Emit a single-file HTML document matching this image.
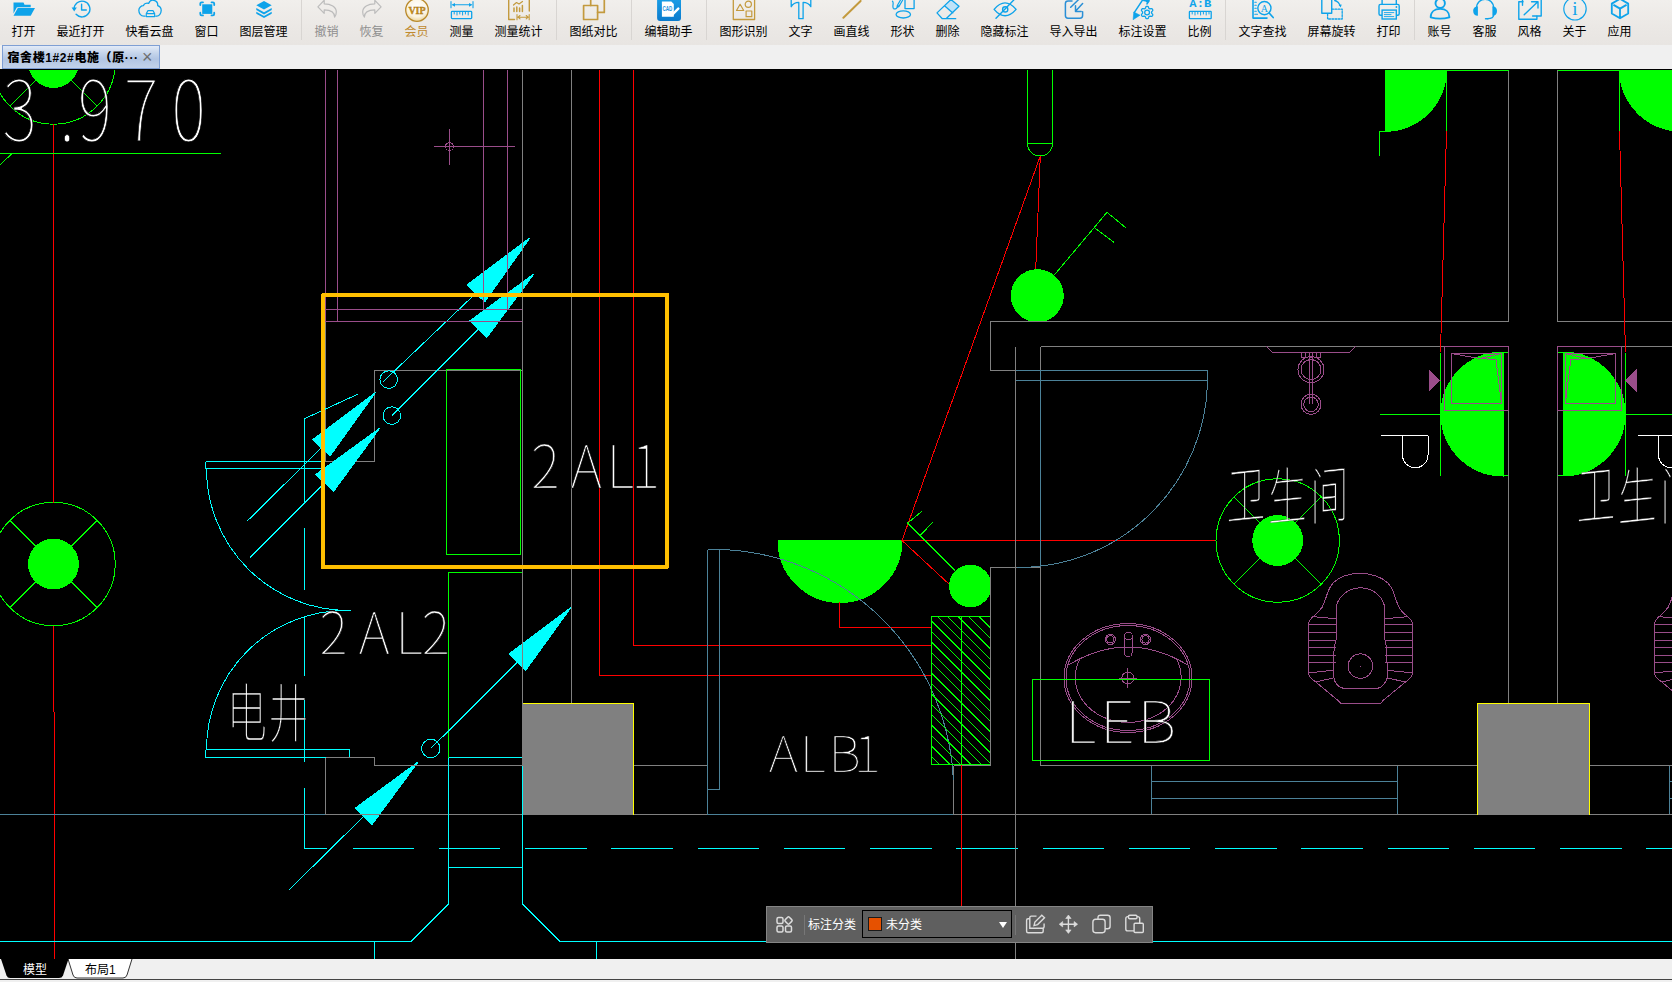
<!DOCTYPE html>
<html lang="zh-CN"><head><meta charset="utf-8"><title>CAD</title>
<style>
html,body{margin:0;padding:0;}
body{width:1672px;height:982px;overflow:hidden;background:#f0f0f0;position:relative;font-family:"Liberation Sans","Noto Sans CJK SC",sans-serif;font-size:12px;color:#000;}
#toolbar{position:absolute;left:0;top:0;width:1672px;height:45px;background:linear-gradient(#f1efec,#ebe8e5 60%,#e8e5e2);display:flex;overflow:hidden;padding-left:1px;box-sizing:border-box;}
.tbi{position:relative;height:45px;flex:none;text-align:center;}
.tbi .ic{position:absolute;left:50%;top:0;overflow:hidden;}
.tbi span{position:absolute;left:0;right:0;top:23px;line-height:18px;font-size:12px;white-space:nowrap;}
.tbi.dis span{color:#8e8e8e;} .tbi.vip span{color:#c08a2e;}
.sep{flex:none;width:6px;height:45px;position:relative;}
.sep:after{content:"";position:absolute;left:3px;top:0;height:40px;width:1px;background:#d8d5d2;}
#tabs{position:absolute;left:0;top:45px;width:1672px;height:24px;background:#f0f0f0;}
#tab1{position:absolute;left:2px;top:0;width:156px;height:22px;border:1px solid #7f9fd4;background:linear-gradient(#e3ebf7,#c3d3ea 35%,#b1c5e3 60%,#c2d2ea);font-weight:bold;font-size:12px;line-height:24px;white-space:nowrap;}
#tab1 b{position:absolute;left:4.5px;top:0;letter-spacing:0.6px;}
#tab1 i{position:absolute;left:139px;top:-1px;font-style:normal;font-weight:normal;color:#6e6e6e;font-size:18px;line-height:24px;}
#cad{position:absolute;left:0;top:69px;width:1672px;height:890px;background:#000;display:block;}
#float{position:absolute;left:766px;top:906px;width:385px;height:35px;background:#5f5f5f;border:1px solid #858585;}
#float .lbl{position:absolute;left:41px;top:1px;line-height:35px;color:#fff;font-size:12px;}
#float .vs{position:absolute;top:8px;width:1px;height:20px;background:#777;}
#dd{position:absolute;left:95px;top:3px;width:148px;height:26px;border:1px solid #000;background:#5f5f5f;}
#dd .sw{position:absolute;left:5px;top:6px;width:14px;height:14px;background:#e65100;border:1px solid #1a1a1a;box-sizing:border-box;}
#dd span{position:absolute;left:23px;top:0.5px;line-height:26px;color:#fff;font-size:12px;}
#dd .tri{position:absolute;left:136px;top:11px;width:0;height:0;border-left:4.5px solid transparent;border-right:4.5px solid transparent;border-top:6px solid #fff;}
#float svg{position:absolute;top:7px;}
#bottom{position:absolute;left:0;top:959px;width:1672px;height:23px;background:#f0f0f0;}
#bottom .ln{position:absolute;left:0;top:20px;width:1672px;height:1px;background:#444;}
#bottom svg{position:absolute;left:0;top:0;}
</style></head><body>
<div id="toolbar">
<div class="tbi " style="width:45px"><svg class="ic" style="margin-left:-15.6px" width="32" height="24" viewBox="0 0 32 24"><path d="M5.5,2.4 H15.5 L16.5,4.8 H22.7 V7.2 H8.9 L5.5,13.6 Z" fill="#0ea3ea"/><path d="M9.8,8.1 H27 L22.7,15.8 H5.5 Z" fill="#0ea3ea"/></svg><span>打开</span></div>
<div class="tbi " style="width:69px"><svg class="ic" style="margin-left:-15.8px" width="32" height="24" viewBox="0 0 32 24"><path d="M9.1,9.2 A7.9,7.9 0 1 1 11.1,14.3" fill="none" stroke="#0ea3ea" stroke-width="1.4" stroke-linecap="round" stroke-linejoin="round" /><path d="M6.6,7.6 H11.8 L9.2,11.4 Z" fill="#0ea3ea"/><path d="M16.6,4.3 V10 H21.3" fill="none" stroke="#0ea3ea" stroke-width="1.4" stroke-linecap="round" stroke-linejoin="round" /></svg><span>最近打开</span></div>
<div class="tbi " style="width:69px"><svg class="ic" style="margin-left:-15.4px" width="32" height="24" viewBox="0 0 32 24"><g transform="translate(16 8.5) scale(0.93) translate(-16 -8.5)"><path d="M10.7,16.7 H9.5 C6,16.7 4,13.5 4,10.5 C4,7.5 6.5,5.5 9,5.5 C9.5,3.5 12,2 14.5,3 C15.5,0.5 18,-0.8 20,-0.3 C23,0.3 24.5,3 24.3,5.5 C27,6.5 28.2,8.8 28,11 C27.8,14.5 25.5,16.7 23.5,16.7 H22.2" fill="none" stroke="#0ea3ea" stroke-width="1.4" stroke-linecap="round" stroke-linejoin="round" /><path d="M12,14 L13.8,10.8 H19.2 L21,14 V17.2 H12 Z M12,14 H21" fill="none" stroke="#0ea3ea" stroke-width="1.2" stroke-linecap="round" stroke-linejoin="round" /></g></svg><span>快看云盘</span></div>
<div class="tbi " style="width:45px"><svg class="ic" style="margin-left:-15.5px" width="32" height="24" viewBox="0 0 32 24"><rect x="11.2" y="4.3" width="10.1" height="9.6" fill="#0ea3ea"/><path d="M9.3,5 V3.6 Q9.3,2.3 10.6,2.3 H12 M20.5,2.3 H21.9 Q23.2,2.3 23.2,3.6 V5 M23.2,12.7 V14.1 Q23.2,15.4 21.9,15.4 H20.5 M12,15.4 H10.6 Q9.3,15.4 9.3,14.1 V12.7" fill="none" stroke="#0ea3ea" stroke-width="1.8" stroke-linecap="round" stroke-linejoin="round" /></svg><span>窗口</span></div>
<div class="tbi " style="width:69px"><svg class="ic" style="margin-left:-15.1px" width="32" height="24" viewBox="0 0 32 24"><path d="M16,1 L23.7,5.3 L16,9.6 L8.3,5.3 Z" fill="#0ea3ea"/><path d="M8.3,8 L16,12.3 L23.7,8 V10.1 L16,14.4 L8.3,10.1 Z M8.3,11.7 L16,16 L23.7,11.7 V13.8 L16,18.1 L8.3,13.8 Z" fill="#0ea3ea"/></svg><span>图层管理</span></div>
<div class="sep"></div>
<div class="tbi dis" style="width:45px"><svg class="ic" style="margin-left:-16px" width="32" height="24" viewBox="0 0 32 24"><path d="M6.9,6.8 L13.2,0.3 V3.8 C20,3.8 25.3,7 25.3,12 C25.3,14 24.5,16 23.6,17 C23.6,13 20,10 13.2,9.9 V13.3 Z" fill="none" stroke="#bcbcbc" stroke-width="1.2" stroke-linecap="round" stroke-linejoin="round" /></svg><span>撤销</span></div>
<div class="tbi dis" style="width:45px"><svg class="ic" style="margin-left:-15.3px" width="32" height="24" viewBox="0 0 32 24"><path d="M25.1,6.8 L18.8,0.3 V3.8 C12,3.8 6.7,7 6.7,12 C6.7,14 7.5,16 8.4,17 C8.4,13 12,10 18.8,9.9 V13.3 Z" fill="none" stroke="#bcbcbc" stroke-width="1.2" stroke-linecap="round" stroke-linejoin="round" /></svg><span>恢复</span></div>
<div class="tbi vip" style="width:45px"><svg class="ic" style="margin-left:-15.3px" width="32" height="24" viewBox="0 0 32 24"><defs><radialGradient id="vg" cx="50%" cy="35%" r="65%"><stop offset="0" stop-color="#fff"/><stop offset="0.7" stop-color="#fbf3df"/><stop offset="1" stop-color="#e9d29a"/></radialGradient></defs><circle cx="16" cy="10" r="11.3" fill="url(#vg)" stroke="#b98a2c" stroke-width="1.3"/><text x="16" y="13.6" text-anchor="middle" font-family="'Liberation Serif',serif" font-weight="bold" font-size="10" fill="#c8921a" stroke="#a06a08" stroke-width="0.3">VIP</text></svg><span>会员</span></div>
<div class="tbi " style="width:45px"><svg class="ic" style="margin-left:-15.5px" width="32" height="24" viewBox="0 0 32 24"><path d="M5,1.6 V7.8 M27,1.6 V7.8 M7,4.8 H25" fill="none" stroke="#0ea3ea" stroke-width="1.1" stroke-linecap="round" stroke-linejoin="round" /><path d="M5.6,4.8 L9,2.9 V6.7 Z M26.4,4.8 L23,2.9 V6.7 Z" fill="#0ea3ea"/><rect x="5.4" y="11.4" width="20.3" height="7.2" rx="0.8" fill="none" stroke="#0ea3ea" stroke-width="1.3" stroke-linecap="round" stroke-linejoin="round" /><path d="M8.2,11.4 V14 M11,11.4 V15 M13.8,11.4 V14 M16.6,11.4 V15 M19.4,11.4 V14 M22.2,11.4 V15" fill="none" stroke="#0ea3ea" stroke-width="1" stroke-linecap="round" stroke-linejoin="round" /></svg><span>测量</span></div>
<div class="tbi " style="width:69px"><svg class="ic" style="margin-left:-15.8px" width="32" height="24" viewBox="0 0 32 24"><path d="M11.5,19.5 H5.7 V-1 M26.3,-1 V11" fill="none" stroke="#c39a3e" stroke-width="1.4" stroke-linecap="round" stroke-linejoin="round" /><path d="M11,11.5 V8 M13.8,11.5 V7 M16.6,11.5 V8 M19.4,11.5 V5.5" fill="none" stroke="#c39a3e" stroke-width="1.5" stroke-linecap="round" stroke-linejoin="round" stroke-linecap='butt'/><path d="M10.5,5 L13.5,2.5 L16,4 L19.5,1.5" fill="none" stroke="#c39a3e" stroke-width="1.2" stroke-linecap="round" stroke-linejoin="round" /><path d="M14,14.5 V19.8 M26.2,14.5 V19.8 M15,17.2 H25.2 M17,15.5 L15,17.2 L17,18.9 M23.2,15.5 L25.2,17.2 L23.2,18.9" fill="none" stroke="#c39a3e" stroke-width="1.1" stroke-linecap="round" stroke-linejoin="round" /></svg><span>测量统计</span></div>
<div class="sep"></div>
<div class="tbi " style="width:69px"><svg class="ic" style="margin-left:-15.5px" width="32" height="24" viewBox="0 0 32 24"><rect x="5.6" y="5.5" width="14" height="14" fill="none" stroke="#c39a3e" stroke-width="1.7" stroke-linecap="round" stroke-linejoin="round" stroke-linejoin='miter'/><path d="M12.7,5.5 V-2 M26.3,-2 V12.4 H19.6" fill="none" stroke="#c39a3e" stroke-width="1.7" stroke-linecap="round" stroke-linejoin="round" stroke-linejoin='miter'/></svg><span>图纸对比</span></div>
<div class="sep"></div>
<div class="tbi " style="width:69px"><svg class="ic" style="margin-left:-15.5px" width="32" height="24" viewBox="0 0 32 24"><defs><linearGradient id="eg" x1="0" y1="0" x2="0" y2="1"><stop offset="0" stop-color="#1ba3ea"/><stop offset="1" stop-color="#0b7bcd"/></linearGradient></defs><rect x="4.1" y="-5" width="23.9" height="25.9" rx="3" fill="url(#eg)"/><path d="M8.9,1.4 H18.3 L20.8,3.9 V16.7 H8.9 Z" fill="#fff"/><text x="9.5" y="11.2" font-family="'Liberation Sans',sans-serif" font-weight="bold" font-size="7" fill="#1a8fdc" textLength="9.8" lengthAdjust="spacingAndGlyphs">CAD</text><path d="M19.3,14.6 L25.3,8.6" stroke="#fff" stroke-width="2.4" stroke-linecap="round"/><path d="M17.6,16.6 L18.2,14.2 L20,16 Z" fill="#fff"/></svg><span>编辑助手</span></div>
<div class="sep"></div>
<div class="tbi " style="width:69px"><svg class="ic" style="margin-left:-15.5px" width="32" height="24" viewBox="0 0 32 24"><path d="M5.3,-3 V19.5 H26.6 V-3" fill="none" stroke="#c39a3e" stroke-width="1.3" stroke-linecap="round" stroke-linejoin="round" stroke-linejoin='miter'/><path d="M8.5,10.5 L12.1,4.3 L15.7,10.5 Z" fill="none" stroke="#c39a3e" stroke-width="1.2" stroke-linecap="round" stroke-linejoin="round" /><circle cx="20.3" cy="4.3" r="3.1" fill="none" stroke="#c39a3e" stroke-width="1.2" stroke-linecap="round" stroke-linejoin="round" /><rect x="18.1" y="11" width="5.7" height="5.7" fill="none" stroke="#c39a3e" stroke-width="1.2" stroke-linecap="round" stroke-linejoin="round" /></svg><span>图形识别</span></div>
<div class="tbi " style="width:45px"><svg class="ic" style="margin-left:-15.1px" width="32" height="24" viewBox="0 0 32 24"><path d="M6.2,6.7 V-2 H25.8 V6.7 C24,3.5 21,2.4 18.1,2.4 V18.7 H13.8 V2.4 C11,2.4 8,3.5 6.2,6.7 Z" fill="none" stroke="#0ea3ea" stroke-width="1.3" stroke-linecap="round" stroke-linejoin="round" /></svg><span>文字</span></div>
<div class="tbi " style="width:57px"><svg class="ic" style="margin-left:-15.2px" width="32" height="24" viewBox="0 0 32 24"><path d="M7.4,17.7 L24.6,1" fill="none" stroke="#c39a3e" stroke-width="2" stroke-linecap="round" stroke-linejoin="round" /></svg><span>画直线</span></div>
<div class="tbi " style="width:45px"><svg class="ic" style="margin-left:-15.8px" width="32" height="24" viewBox="0 0 32 24"><rect x="18" y="-2" width="9.1" height="10.6" fill="none" stroke="#0ea3ea" stroke-width="1.3" stroke-linecap="round" stroke-linejoin="round" /><ellipse cx="16.3" cy="14.4" rx="7.2" ry="3.6" fill="none" stroke="#0ea3ea" stroke-width="1.3" stroke-linecap="round" stroke-linejoin="round" /><path d="M5.5,1.2 C7.2,2.8 5,6 6.3,8.3 C7.6,9.6 9.3,8.8 10,7.6 L10.3,5.5 L13.8,-0.5 M10.3,5.5 L12,6.4 L15.6,0.3 M10,7.6 L12,6.4" fill="none" stroke="#0ea3ea" stroke-width="1.2" stroke-linecap="round" stroke-linejoin="round" /></svg><span>形状</span></div>
<div class="tbi " style="width:45px"><svg class="ic" style="margin-left:-15.3px" width="32" height="24" viewBox="0 0 32 24"><path d="M19,-0.5 L27,6.2 L20.8,12.9 L13.1,6.2 Z" fill="#bfe3f8"/><path d="M19,-0.5 L27,6.2 L14.1,18.7 H10.3 L5,12.9 Z M13.1,6.2 L20.8,12.9 M10.3,18.7 H23.7" fill="none" stroke="#0ea3ea" stroke-width="1.3" stroke-linecap="round" stroke-linejoin="round" /></svg><span>删除</span></div>
<div class="tbi " style="width:69px"><svg class="ic" style="margin-left:-15.5px" width="32" height="24" viewBox="0 0 32 24"><path d="M5.1,9.4 Q16,-3.6 27.1,9.4 Q16,22.2 5.1,9.4 Z" fill="none" stroke="#0ea3ea" stroke-width="1.4" stroke-linecap="round" stroke-linejoin="round" /><circle cx="16.2" cy="9.4" r="2.6" fill="none" stroke="#0ea3ea" stroke-width="1.4" stroke-linecap="round" stroke-linejoin="round" /><path d="M7,18.2 L24.8,0" fill="none" stroke="#0ea3ea" stroke-width="1.4" stroke-linecap="round" stroke-linejoin="round" /></svg><span>隐藏标注</span></div>
<div class="tbi " style="width:69px"><svg class="ic" style="margin-left:-15.5px" width="32" height="24" viewBox="0 0 32 24"><path d="M14,1 H10 Q7.4,1 7.4,3.6 V15.6 Q7.4,18.2 10,18.2 H22 Q24.6,18.2 24.6,15.6 V11.8" fill="none" stroke="#2a8fd6" stroke-width="1.5" stroke-linecap="round" stroke-linejoin="round" /><path d="M12.7,7.2 L20.4,-0.2 M24.6,3.6 L17.5,11.2 M17.5,5.8 V11.4 H23.2" fill="none" stroke="#2a8fd6" stroke-width="1.5" stroke-linecap="round" stroke-linejoin="round" /></svg><span>导入导出</span></div>
<div class="tbi " style="width:69px"><svg class="ic" style="margin-left:-17.5px" width="32" height="24" viewBox="0 0 32 24"><path d="M17.9,-0.5 L9.4,12.4" fill="none" stroke="#0ea3ea" stroke-width="1.5" stroke-linecap="round" stroke-linejoin="round" /><path d="M17.3,-1 H25 L24.6,1.5 L22.3,4.8 L21,4.3 L21.8,2.6 L20.5,1.5 L18.4,1.3 Z" fill="#0ea3ea"/><path d="M8.8,12 L15,15.2 L8.1,19.7 Z" fill="#0ea3ea" stroke="#0ea3ea" stroke-width="0.6" stroke-linejoin="round"/><path d="M26.60,12.50 L26.58,12.89 L26.70,13.31 L27.27,13.88 L27.77,14.56 L27.72,15.12 L27.47,15.60 L27.18,16.06 L26.72,16.38 L25.88,16.28 L25.10,16.08 L24.68,16.19 L24.35,16.40 L24.00,16.58 L23.70,16.89 L23.48,17.67 L23.15,18.44 L22.64,18.68 L22.10,18.70 L21.56,18.68 L21.05,18.44 L20.72,17.67 L20.50,16.89 L20.20,16.58 L19.85,16.40 L19.52,16.19 L19.10,16.08 L18.32,16.28 L17.48,16.38 L17.02,16.06 L16.73,15.60 L16.48,15.12 L16.43,14.56 L16.93,13.88 L17.50,13.31 L17.62,12.89 L17.60,12.50 L17.62,12.11 L17.50,11.69 L16.93,11.12 L16.43,10.44 L16.48,9.88 L16.73,9.40 L17.02,8.94 L17.48,8.62 L18.32,8.72 L19.10,8.92 L19.52,8.81 L19.85,8.60 L20.20,8.42 L20.50,8.11 L20.72,7.33 L21.05,6.56 L21.56,6.32 L22.10,6.30 L22.64,6.32 L23.15,6.56 L23.48,7.33 L23.70,8.11 L24.00,8.42 L24.35,8.60 L24.68,8.81 L25.10,8.92 L25.88,8.72 L26.72,8.62 L27.18,8.94 L27.47,9.40 L27.72,9.88 L27.77,10.44 L27.27,11.12 L26.70,11.69 L26.58,12.11 Z" fill="none" stroke="#0ea3ea" stroke-width="1.3" stroke-linecap="round" stroke-linejoin="round" /><circle cx="22.1" cy="12.5" r="2.4" fill="none" stroke="#0ea3ea" stroke-width="1.3" stroke-linecap="round" stroke-linejoin="round" /></svg><span>标注设置</span></div>
<div class="tbi " style="width:45px"><svg class="ic" style="margin-left:-15.7px" width="32" height="24" viewBox="0 0 32 24"><text x="16.3" y="7" text-anchor="middle" font-family="'Liberation Mono',monospace" font-weight="bold" font-size="10.5" fill="#0ea3ea" textLength="22" lengthAdjust="spacingAndGlyphs">A:B</text><rect x="5.4" y="11.4" width="21.8" height="7.2" rx="0.6" fill="none" stroke="#0ea3ea" stroke-width="1.3" stroke-linecap="round" stroke-linejoin="round" /><path d="M8.2,11.4 V14 M11,11.4 V15 M13.8,11.4 V14 M16.6,11.4 V15 M19.4,11.4 V14 M22.2,11.4 V15 M25,11.4 V14" fill="none" stroke="#0ea3ea" stroke-width="1" stroke-linecap="round" stroke-linejoin="round" /></svg><span>比例</span></div>
<div class="sep"></div>
<div class="tbi " style="width:69px"><svg class="ic" style="margin-left:-15.7px" width="32" height="24" viewBox="0 0 32 24"><path d="M6,-2 V18.1 H20" fill="none" stroke="#0ea3ea" stroke-width="1.6" stroke-linecap="round" stroke-linejoin="round" stroke-linejoin='miter'/><path d="M7.8,2.3 H9.3 M7.8,5.3 H9.3 M7.8,8.3 H9.3 M7.8,11.3 H9.3 M7.8,14.3 H10.5" fill="none" stroke="#0ea3ea" stroke-width="1.1" stroke-linecap="round" stroke-linejoin="round" /><circle cx="17.4" cy="8.1" r="6.6" fill="#f0eeeb" stroke="#0ea3ea" stroke-width="1.4"/><path d="M22.2,13 L26.2,17.6" fill="none" stroke="#0ea3ea" stroke-width="1.6" stroke-linecap="round" stroke-linejoin="round" /><text x="17.4" y="11.6" text-anchor="middle" font-family="'Liberation Serif',serif" font-size="10" fill="#0ea3ea">A</text></svg><span>文字查找</span></div>
<div class="tbi " style="width:69px"><svg class="ic" style="margin-left:-15.7px" width="32" height="24" viewBox="0 0 32 24"><path d="M5.8,-2 V13.3 H15.7 V-2" fill="none" stroke="#0ea3ea" stroke-width="1.4" stroke-linecap="round" stroke-linejoin="round" stroke-linejoin='miter'/><path d="M15.7,9.2 H26.2 V19 H11.6 V13.3" fill="none" stroke="#0ea3ea" stroke-width="1.3" stroke-linecap="round" stroke-linejoin="round" stroke-dasharray='1.8 1.4' stroke-linecap='butt'/><path d="M19,0.3 Q23,1.8 24.3,5.6" fill="none" stroke="#0ea3ea" stroke-width="1.3" stroke-linecap="round" stroke-linejoin="round" /><path d="M17.8,-0.8 L20.5,-0.6 L19,1.9 Z M22.6,5 L25.7,4.4 L24.8,7.4 Z" fill="#0ea3ea"/></svg><span>屏幕旋转</span></div>
<div class="tbi " style="width:45px"><svg class="ic" style="margin-left:-15.7px" width="32" height="24" viewBox="0 0 32 24"><path d="M9.1,4.3 V-2 M23.3,-2 V4.3" fill="none" stroke="#0ea3ea" stroke-width="1.4" stroke-linecap="round" stroke-linejoin="round" /><rect x="6" y="4.4" width="20.2" height="10.8" rx="1.5" fill="none" stroke="#0ea3ea" stroke-width="1.4" stroke-linecap="round" stroke-linejoin="round" /><rect x="9.1" y="10.1" width="14.2" height="8.9" fill="#f0eeeb" stroke="#0ea3ea" stroke-width="1.4"/><path d="M11.3,12.6 H20.8 M11.3,14.6 H18 M11.3,16.6 H20.8" fill="none" stroke="#0ea3ea" stroke-width="0.9" stroke-linecap="round" stroke-linejoin="round" /><circle cx="23.4" cy="7" r="0.9" fill="#0ea3ea"/></svg><span>打印</span></div>
<div class="sep"></div>
<div class="tbi " style="width:45px"><svg class="ic" style="margin-left:-15.5px" width="32" height="24" viewBox="0 0 32 24"><circle cx="16.2" cy="3.3" r="4.7" fill="none" stroke="#0ea3ea" stroke-width="1.9" stroke-linecap="round" stroke-linejoin="round" /><path d="M6.7,17.3 C6.7,12 10.5,8.9 16.2,8.9 C21.8,8.9 25.4,12 25.4,17.3 C20,18.8 12,18.8 6.7,17.3 Z" fill="none" stroke="#0ea3ea" stroke-width="1.9" stroke-linecap="round" stroke-linejoin="round" /></svg><span>账号</span></div>
<div class="tbi " style="width:45px"><svg class="ic" style="margin-left:-15.8px" width="32" height="24" viewBox="0 0 32 24"><path d="M7.6,8 C7.6,-3.5 24.6,-3.5 24.6,8" fill="none" stroke="#0ea3ea" stroke-width="1.4" stroke-linecap="round" stroke-linejoin="round" /><path d="M8.9,6.5 C5.5,6.5 4.2,8.5 4.2,11 C4.2,13.8 5.8,15.8 8.9,15.8 Z M23.4,6.5 C26.8,6.5 28,8.5 28,11 C28,13.8 26.5,15.8 23.4,15.8 Z" fill="#0ea3ea"/><path d="M24.6,15 C24.6,17.8 22,18.6 18.5,18.7" fill="none" stroke="#0ea3ea" stroke-width="1.3" stroke-linecap="round" stroke-linejoin="round" /><rect x="15.8" y="17.9" width="4" height="1.7" rx="0.8" fill="#0ea3ea"/></svg><span>客服</span></div>
<div class="tbi " style="width:45px"><svg class="ic" style="margin-left:-15.5px" width="32" height="24" viewBox="0 0 32 24"><path d="M9,1.7 H4.8 V19.3 H22.9 V16.1" fill="none" stroke="#0ea3ea" stroke-width="1.4" stroke-linecap="round" stroke-linejoin="round" stroke-linejoin='miter'/><path d="M8.5,-2 V5.3 M27.2,-2 V16 H18.6" fill="none" stroke="#0ea3ea" stroke-width="1.4" stroke-linecap="round" stroke-linejoin="round" stroke-linejoin='miter'/><path d="M10.2,14.8 L23.8,1.8 M17.6,1.7 H24 V8" fill="none" stroke="#0ea3ea" stroke-width="1.4" stroke-linecap="round" stroke-linejoin="round" /></svg><span>风格</span></div>
<div class="tbi " style="width:45px"><svg class="ic" style="margin-left:-15.5px" width="32" height="24" viewBox="0 0 32 24"><circle cx="16" cy="8.8" r="11.2" fill="none" stroke="#0ea3ea" stroke-width="1.2" stroke-linecap="round" stroke-linejoin="round" /><text x="16" y="15.2" text-anchor="middle" font-family="'Liberation Serif',serif" font-size="19" fill="#0ea3ea">i</text></svg><span>关于</span></div>
<div class="tbi " style="width:45px"><svg class="ic" style="margin-left:-15.5px" width="32" height="24" viewBox="0 0 32 24"><path d="M16,-1.2 L24.2,3.6 V13.5 L16,18.3 L7.8,13.5 V3.6 Z M16,8.6 V17.6 M16,8.6 L10,5.1 M16,8.6 L22,5.1" fill="none" stroke="#0ea3ea" stroke-width="1.8" stroke-linecap="round" stroke-linejoin="round" /></svg><span>应用</span></div>
</div>
<div id="tabs"><div id="tab1"><b>宿舍楼1#2#电施（原···</b><i>×</i></div></div>
<svg id="cad" viewBox="0 69 1672 890" shape-rendering="crispEdges" fill="none" stroke-width="1">
<circle cx="53.5" cy="62.5" r="61.7" stroke="#00ff00"/>
<circle cx="53.5" cy="62.5" r="24.9" fill="#00ff00" stroke="#00ff00"/>
<polyline points="35.893,44.893 9.87151,18.8715" stroke="#00ff00" />
<polyline points="35.893,80.107 9.87151,106.128" stroke="#00ff00" />
<polyline points="71.107,44.893 97.1285,18.8715" stroke="#00ff00" />
<polyline points="71.107,80.107 97.1285,106.128" stroke="#00ff00" />
<circle cx="53.5" cy="564" r="61.7" stroke="#00ff00"/>
<circle cx="53.5" cy="564" r="24.9" fill="#00ff00" stroke="#00ff00"/>
<polyline points="35.893,546.393 9.87151,520.372" stroke="#00ff00" />
<polyline points="35.893,581.607 9.87151,607.628" stroke="#00ff00" />
<polyline points="71.107,546.393 97.1285,520.372" stroke="#00ff00" />
<polyline points="71.107,581.607 97.1285,607.628" stroke="#00ff00" />
<polyline points="53.5,124 53.5,502.5" stroke="#ff0000" />
<polyline points="53.5,625.5 53.5,711.5" stroke="#ff0000" />
<polyline points="54.5,711.5 54.5,959" stroke="#ff0000" />
<polyline points="0,153.5 221,153.5" stroke="#00ff00" />
<polyline points="12,153.5 0,165" stroke="#00ff00" />
<polyline points="325.5,461.5 374.5,461.5 374.5,370.5 522.5,370.5" stroke="#808080" />
<polyline points="325.5,296 325.5,461.5" stroke="#808080" />
<rect x="446.5" y="369.5" width="74" height="185" stroke="#00ff00"/>
<polyline points="448.5,757.5 448.5,572.5 522.5,572.5" stroke="#00ff00" />
<polyline points="205.5,461.5 321.5,461.5" stroke="#00ffff" />
<polyline points="205.5,468.5 321.5,468.5" stroke="#00ffff" />
<polyline points="205.5,461.5 205.5,468.5" stroke="#00ffff" />
<path d="M206.5,468.5 A142,142 0 0 0 348.5,610.5 L351,610.5" stroke="#00ffff" fill="none" />
<path d="M206.5,749.5 A139,139 0 0 1 345.5,610.5" stroke="#00ffff" fill="none" />
<polyline points="205.5,749.5 349.5,749.5" stroke="#00ffff" />
<polyline points="205.5,757.5 325.5,757.5" stroke="#00ffff" />
<polyline points="205.5,749.5 205.5,757.5" stroke="#00ffff" />
<polyline points="349.5,749.5 349.5,757.5" stroke="#00ffff" />
<polyline points="358.4,393.9 304.5,418.7 304.5,502" stroke="#00ffff" />
<polyline points="304.5,528 304.5,589.5" stroke="#00ffff" />
<polyline points="304.5,617 304.5,676" stroke="#00ffff" />
<polyline points="304.5,700 304.5,761.5" stroke="#00ffff" />
<polyline points="304.5,787.5 304.5,848.5" stroke="#00ffff" />
<polyline points="304.5,848.5 326.5,848.5" stroke="#00ffff" />
<polyline points="352.5,848.5 1672,848.5" stroke="#00ffff" stroke-dasharray="61.5 24.75"/>
<polygon points="530.1,237.7 466.8,285 484.7,301.8" fill="#00ffff" stroke="#00ffff"/>
<polyline points="475.75,293.4 382.5,382.3" stroke="#00ffff" />
<circle cx="388.7" cy="379.6" r="8.8" stroke="#00ffff"/>
<polygon points="534.3,273.6 470.2,320.6 486.7,337.5" fill="#00ffff" stroke="#00ffff"/>
<polyline points="478.45,329.05 391.8,415.6" stroke="#00ffff" />
<circle cx="391.8" cy="415.6" r="8.8" stroke="#00ffff"/>
<polygon points="375.5,392.5 312.8,439.5 330,456" fill="#00ffff" stroke="#00ffff"/>
<polyline points="321.4,447.75 247.3,521" stroke="#00ffff" />
<polygon points="379.8,428.1 315.7,474.6 333.6,491.4" fill="#00ffff" stroke="#00ffff"/>
<polyline points="324.65,483 250,557.7" stroke="#00ffff" />
<polygon points="571,607.5 509.3,653.7 525.7,670.3" fill="#00ffff" stroke="#00ffff"/>
<polyline points="517.5,662 430.8,748.5" stroke="#00ffff" />
<circle cx="430.8" cy="748.5" r="9.2" stroke="#00ffff"/>
<polygon points="418.3,761.7 355,808.3 371.7,825" fill="#00ffff" stroke="#00ffff"/>
<polyline points="363.35,816.65 289,890" stroke="#00ffff" />
<polyline points="325.5,69 325.5,321.5" stroke="#9a4d8a" />
<polyline points="337.5,69 337.5,321.5" stroke="#9a4d8a" />
<polyline points="483.5,69 483.5,309.5" stroke="#9a4d8a" />
<polyline points="507.5,69 507.5,309.5" stroke="#9a4d8a" />
<polyline points="325.5,309.5 522.5,309.5" stroke="#9a4d8a" />
<polyline points="325.5,321.5 522.5,321.5" stroke="#9a4d8a" />
<polyline points="522.5,69 522.5,703" stroke="#808080" />
<polyline points="434,146.5 515,146.5" stroke="#9a4d8a" />
<polyline points="449.5,129 449.5,165" stroke="#9a4d8a" />
<circle cx="449.5" cy="146.5" r="4" stroke="#9a4d8a"/>
<polyline points="0,814.5 325.5,814.5" stroke="#4c8299" />
<polyline points="325.5,757.5 374.5,757.5 374.5,765.5 522.5,765.5" stroke="#808080" />
<polyline points="325.5,757.5 325.5,814.5" stroke="#808080" />
<polyline points="325.5,814.5 707.5,814.5" stroke="#808080" />
<polyline points="448.5,757.5 448.5,904 411,941.5 0,941.5" stroke="#00ffff" />
<polyline points="448.5,757.5 522.5,757.5" stroke="#00ffff" />
<polyline points="448.5,867.5 522.5,867.5" stroke="#00ffff" />
<polyline points="374.5,941.5 374.5,959" stroke="#00ffff" />
<polyline points="596.5,941.5 596.5,959" stroke="#00ffff" />
<rect x="522" y="703" width="112" height="111.5" fill="#808080"/>
<polyline points="522.5,703.5 633.5,703.5 633.5,814.5" stroke="#ffff00" />
<polyline points="571.5,69 571.5,703" stroke="#808080" />
<polyline points="522.5,765.5 522.5,904 560,941.5 1672,941.5" stroke="#00ffff" />
<polyline points="599.5,69 599.5,675.5 932,675.5" stroke="#ff0000" />
<polyline points="633.5,69 633.5,645.5 932,645.5" stroke="#ff0000" />
<polyline points="633.5,765.5 707.5,765.5" stroke="#808080" />
<polyline points="707.5,549.5 707.5,814.5" stroke="#4c8299" />
<polyline points="719.5,549.5 719.5,789.5" stroke="#4c8299" />
<polyline points="707.5,549.5 719.5,549.5" stroke="#4c8299" />
<polyline points="707.5,789.5 719.5,789.5" stroke="#4c8299" />
<polyline points="707.5,814.5 953.5,814.5" stroke="#4c8299" />
<polyline points="953.5,765.5 953.5,814.5" stroke="#808080" />
<path d="M778,540.5 A62,62 0 0 0 902,540.5 Z" stroke="#00ff00" fill="#00ff00" />
<polyline points="1040.3,156 902,540.5 1215.7,540.5" stroke="#ff0000" />
<polyline points="902,540.5 950.3,585.3" stroke="#ff0000" />
<polyline points="1040.3,156 1035.7,270" stroke="#ff0000" />
<polyline points="839.5,602 839.5,627.5 932,627.5" stroke="#ff0000" />
<path d="M719.5,549.5 A240.5,240.5 0 0 1 953.3,780" stroke="#4c8299" fill="none" />
<polyline points="1027.5,69 1027.5,143.5" stroke="#00ff00" />
<polyline points="1052.5,69 1052.5,143.5" stroke="#00ff00" />
<polyline points="1027.5,143.5 1052.5,143.5" stroke="#00ff00" />
<path d="M1027.5,143.5 A12.5,12.5 0 0 0 1052.5,143.5" stroke="#00ff00" fill="none" />
<circle cx="1037.3" cy="295.7" r="26" fill="#00ff00" stroke="#00ff00"/>
<polyline points="1054.3,275 1107,212.3 1125.7,227.7" stroke="#00ff00" />
<polyline points="1095.3,228.3 1114.3,242.7" stroke="#00ff00" />
<circle cx="970.3" cy="586" r="20.7" fill="#00ff00" stroke="#00ff00"/>
<polyline points="955.3,571 907.7,523 922,511.3" stroke="#00ff00" />
<polyline points="920.3,535.3 933,522" stroke="#00ff00" />
<defs><clipPath id="hc"><rect x="931.5" y="616.5" width="59" height="148"/></clipPath></defs>
<path d="M931.5,548.3 L990.5,607.3 M931.5,558.7 L990.5,617.7 M931.5,569.1 L990.5,628.1 M931.5,579.5 L990.5,638.5 M931.5,589.9 L990.5,648.9 M931.5,600.3 L990.5,659.3 M931.5,610.7 L990.5,669.7 M931.5,621.1 L990.5,680.1 M931.5,631.5 L990.5,690.5 M931.5,641.9 L990.5,700.9 M931.5,652.3 L990.5,711.3 M931.5,662.7 L990.5,721.7 M931.5,673.1 L990.5,732.1 M931.5,683.5 L990.5,742.5 M931.5,693.9 L990.5,752.9 M931.5,704.3 L990.5,763.3 M931.5,714.7 L990.5,773.7 M931.5,725.1 L990.5,784.1 M931.5,735.5 L990.5,794.5 M931.5,745.9 L990.5,804.9 M931.5,756.3 L990.5,815.3 M931.5,766.7 L990.5,825.7 M931.5,777.1 L990.5,836.1 " stroke="#00ff00" clip-path="url(#hc)"/>
<rect x="931.5" y="616.5" width="59" height="148" stroke="#00ff00"/>
<polyline points="961.5,616.5 961.5,764.5" stroke="#00ff00" />
<polyline points="990.5,765.5 990.5,567.5 1040.5,567.5" stroke="#808080" />
<polyline points="1015.5,346.5 1015.5,959" stroke="#808080" />
<polyline points="1040.5,346.5 1040.5,370.5" stroke="#808080" />
<polyline points="1040.5,567.5 1040.5,765.5" stroke="#808080" />
<polyline points="953.5,765.5 990.5,765.5" stroke="#808080" />
<polyline points="961.5,765 961.5,907" stroke="#ff0000" />
<polyline points="1015.5,370.5 990.5,370.5 990.5,321.5 1508.5,321.5 1508.5,69" stroke="#808080" />
<polyline points="1040.5,346.5 1444.5,346.5" stroke="#808080" />
<polyline points="1621.5,346.5 1672,346.5" stroke="#808080" />
<polyline points="1557.5,69 1557.5,321.5 1672,321.5" stroke="#808080" />
<polyline points="1015.5,370.5 1207.5,370.5" stroke="#4c8299" />
<polyline points="1015.5,380.5 1207.5,380.5" stroke="#4c8299" />
<path d="M1207.5,370.5 V383 A189.6,189.6 0 0 1 1017,567.6" stroke="#4c8299" fill="none" />
<polyline points="1040.5,370.5 1040.5,566" stroke="#4c8299" />
<polyline points="1266.5,346.5 1272.5,352.5 1349.5,352.5 1355.5,346.5" stroke="#9a4d8a" />
<g stroke="#9a4d8a"><circle cx="1311" cy="369.6" r="13"/><circle cx="1311" cy="369.6" r="10"/><circle cx="1311" cy="404.3" r="10"/><circle cx="1311" cy="404.3" r="7.3"/></g>
<rect x="1301.5" y="352.5" width="4" height="5" stroke="#9a4d8a"/><rect x="1316.5" y="352.5" width="4" height="5" stroke="#9a4d8a"/>
<polyline points="1309.5,352.5 1309.5,403.5" stroke="#9a4d8a" />
<polyline points="1312.5,352.5 1312.5,403.5" stroke="#9a4d8a" />
<polyline points="1309.5,357.5 1312.5,357.5" stroke="#9a4d8a" />
<path d="M1385,69 V131.3 A61.3,61.3 0 0 0 1446.3,70 V69 Z" stroke="#00ff00" fill="#00ff00" />
<path d="M1672,69 L1619.5,69 A62,62 0 0 0 1672,130.5 Z" stroke="#00ff00" fill="#00ff00" />
<polyline points="1385.5,131 1379.5,131 1379.5,156" stroke="#00ff00" />
<polyline points="1446.5,70.5 1508.5,70.5" stroke="#00ff00" />
<polyline points="1557.5,70.5 1619.5,70.5" stroke="#00ff00" />
<polyline points="1446.5,69 1446.5,131" stroke="#00ff00" />
<polyline points="1619.5,69 1619.5,131" stroke="#00ff00" />
<polyline points="1446.5,131 1440.5,352.5" stroke="#ff0000" />
<polyline points="1619.5,131 1625.5,352.5" stroke="#ff0000" />
<path d="M1503,352 A62,62 0 0 0 1503,476 Z" stroke="#00ff00" fill="#00ff00" />
<path d="M1563,352 A62,62 0 0 1 1563,476 Z" stroke="#00ff00" fill="#00ff00" />
<polyline points="1503,352.5 1508.5,352.5" stroke="#00ff00" />
<polyline points="1503,475.5 1508.5,475.5" stroke="#00ff00" />
<polyline points="1557.5,352.5 1563,352.5" stroke="#00ff00" />
<polyline points="1557.5,475.5 1563,475.5" stroke="#00ff00" />
<polyline points="1440.5,352.5 1440.5,475.5" stroke="#00ff00" />
<polyline points="1625.5,352.5 1625.5,475.5" stroke="#00ff00" />
<polyline points="1379.5,414.5 1440.5,414.5" stroke="#00ff00" />
<polyline points="1625.5,414.5 1672,414.5" stroke="#00ff00" />
<rect x="1444.5" y="346.5" width="64" height="64" stroke="#9a4d8a"/><rect x="1557.5" y="346.5" width="64" height="64" stroke="#9a4d8a"/>
<rect x="1451.5" y="353.5" width="50" height="50" stroke="#9a4d8a"/><rect x="1565.5" y="353.5" width="50" height="50" stroke="#9a4d8a"/>
<polyline points="1454,354 1479.5,358.5 1496,359.5 1501.3,402" stroke="#9a4d8a" />
<polyline points="1479.5,358.5 1501.5,353.5" stroke="#9a4d8a" />
<polyline points="1612.8,354 1587.3,358.5 1570.8,359.5 1565.5,402" stroke="#9a4d8a" />
<polyline points="1587.3,358.5 1565.3,353.5" stroke="#9a4d8a" />
<polygon points="1429,370 1429,391 1439.8,380.5" fill="#9a4d8a" stroke="#9a4d8a"/>
<polygon points="1636.5,370 1636.5,391 1626.2,380.5" fill="#9a4d8a" stroke="#9a4d8a"/>
<polyline points="1508.5,410.5 1508.5,703.5" stroke="#808080" />
<polyline points="1557.5,410.5 1557.5,703.5" stroke="#808080" />
<path d="M1381,435.5 H1428 M1402.5,435.5 V455 A12.75,12.75 0 0 0 1428,455 V435.5" stroke="#ffffff" fill="none" />
<path d="M1637.5,435.5 H1672 M1658.5,435.5 V455 A12.75,12.75 0 0 0 1684,455" stroke="#ffffff" fill="none" />
<circle cx="1277.7" cy="540.5" r="61.7" stroke="#00ff00"/>
<circle cx="1277.7" cy="540.5" r="24.9" fill="#00ff00" stroke="#00ff00"/>
<polyline points="1260.09,522.893 1234.07,496.872" stroke="#00ff00" />
<polyline points="1260.09,558.107 1234.07,584.128" stroke="#00ff00" />
<polyline points="1295.31,522.893 1321.33,496.872" stroke="#00ff00" />
<polyline points="1295.31,558.107 1321.33,584.128" stroke="#00ff00" />
<g transform="translate(1290,560) scale(0.15267)" stroke="#9a4d8a"><path d="M460,88 C520,88 590,105 640,150 C690,200 680,250 720,320 C750,365 800,380 803,420 V740 C800,770 775,785 755,800 L610,920 L595,940 H335 L320,925 L170,800 C150,785 122,770 120,740 V420 C122,380 170,365 210,310 C245,250 235,200 285,148 C330,105 400,88 460,88 Z" vector-effect="non-scaling-stroke"/><path d="M460,182 C540,182 620,240 622,330 V520 C625,545 632,550 634,600 L636,700 C640,760 640,790 610,820 C590,838 580,840 575,840 H355 C340,840 320,830 305,812 C285,790 285,760 287,700 L288,600 C290,550 298,545 302,520 V330 C302,240 385,182 460,182 Z" vector-effect="non-scaling-stroke"/><path d="M120,423 H300 M625,423 H803 M120,475 H300 M625,475 H803 M120,525 H300 M625,525 H803 M120,573 H300 M625,573 H803 M120,625 H300 M625,625 H803 M120,672 H300 M625,672 H803 M155,370 L200,378 L302,382 M768,370 L722,378 L620,382 M120,740 L285,722 M803,740 L637,722 M170,798 L288,772 M752,798 L634,772" vector-effect="non-scaling-stroke"/><circle cx="461" cy="695" r="80" vector-effect="non-scaling-stroke"/><circle cx="461" cy="697" r="3" fill="#9a4d8a" stroke="none"/></g>
<g transform="translate(1636,560) scale(0.15267)" stroke="#9a4d8a"><path d="M460,88 C520,88 590,105 640,150 C690,200 680,250 720,320 C750,365 800,380 803,420 V740 C800,770 775,785 755,800 L610,920 L595,940 H335 L320,925 L170,800 C150,785 122,770 120,740 V420 C122,380 170,365 210,310 C245,250 235,200 285,148 C330,105 400,88 460,88 Z" vector-effect="non-scaling-stroke"/><path d="M460,182 C540,182 620,240 622,330 V520 C625,545 632,550 634,600 L636,700 C640,760 640,790 610,820 C590,838 580,840 575,840 H355 C340,840 320,830 305,812 C285,790 285,760 287,700 L288,600 C290,550 298,545 302,520 V330 C302,240 385,182 460,182 Z" vector-effect="non-scaling-stroke"/><path d="M120,423 H300 M625,423 H803 M120,475 H300 M625,475 H803 M120,525 H300 M625,525 H803 M120,573 H300 M625,573 H803 M120,625 H300 M625,625 H803 M120,672 H300 M625,672 H803 M155,370 L200,378 L302,382 M768,370 L722,378 L620,382 M120,740 L285,722 M803,740 L637,722 M170,798 L288,772 M752,798 L634,772" vector-effect="non-scaling-stroke"/><circle cx="461" cy="695" r="80" vector-effect="non-scaling-stroke"/><circle cx="461" cy="697" r="3" fill="#9a4d8a" stroke="none"/></g>
<g stroke="#9a4d8a"><ellipse cx="1128" cy="678" rx="64" ry="54.4"/><ellipse cx="1128" cy="678" rx="62" ry="52.5"/><path d="M1080.5,657.7 A53,45 0 1 0 1175.8,657.7"/><path d="M1068.6,665 Q1128,629 1187.7,665"/><circle cx="1110.3" cy="639.4" r="5.1"/><circle cx="1110.3" cy="639.4" r="3.6"/><circle cx="1145.5" cy="639.4" r="5.1"/><circle cx="1145.5" cy="639.4" r="3.6"/><circle cx="1128.3" cy="636" r="4"/><path d="M1124.6,636 V653 A3.7,3.7 0 0 0 1132,653 V636"/><circle cx="1127.8" cy="678" r="6"/><path d="M1119,678 H1136.5 M1127.8,668 V687.6"/></g>
<rect x="1032.5" y="679.5" width="177" height="81" stroke="#00ff00"/>
<rect x="1151.5" y="765.5" width="246" height="49" stroke="#4c8299"/>
<polyline points="1151.5,781.5 1397.5,781.5" stroke="#4c8299" />
<polyline points="1151.5,798.5 1397.5,798.5" stroke="#4c8299" />
<polyline points="1669.5,765.5 1669.5,814.5" stroke="#4c8299" />
<polyline points="1669.5,781.5 1672,781.5" stroke="#4c8299" />
<polyline points="1669.5,798.5 1672,798.5" stroke="#4c8299" />
<polyline points="1040.5,765.5 1477.5,765.5" stroke="#808080" />
<polyline points="1589,765.5 1672,765.5" stroke="#808080" />
<polyline points="953.5,814.5 1672,814.5" stroke="#808080" />
<rect x="1477" y="703" width="112.5" height="111.5" fill="#808080"/>
<polyline points="1477.5,814.5 1477.5,703.5 1589.5,703.5 1589.5,814.5" stroke="#ffff00" />
<rect x="323" y="295" width="344" height="272" stroke="#ffbf00" stroke-width="4" stroke-linejoin="round"/>
<text transform="translate(2.62,141) scale(0.78,1)" x="0.0 72.9 96.2 155.6 216.5" y="0" font-size="84" fill="#ffffff" stroke="#000" stroke-width="0.9" font-family="'Noto Sans CJK SC','Liberation Sans',sans-serif" font-weight="100" shape-rendering="auto">3.970</text>
<text transform="translate(531.159,487.7) scale(0.92,1)" x="0.0 43.0 81.9 109.1" y="0" font-size="59" fill="#ffffff" stroke="#000" stroke-width="0.6" font-family="'Noto Sans CJK SC','Liberation Sans',sans-serif" font-weight="100" shape-rendering="auto">2AL1</text>
<text transform="translate(319.476,654) scale(0.92,1)" x="0.0 42.8 82.5 111.1" y="0" font-size="58.5" fill="#ffffff" stroke="#000" stroke-width="0.6" font-family="'Noto Sans CJK SC','Liberation Sans',sans-serif" font-weight="100" shape-rendering="auto">2AL2</text>
<text transform="translate(768.669,771.7) scale(1.03,1)" x="0.0 30.1 58.2 82.8" y="0" font-size="49.5" fill="#ffffff" stroke="#000" stroke-width="0.6" font-family="'Noto Sans CJK SC','Liberation Sans',sans-serif" font-weight="100" shape-rendering="auto">ALB1</text>
<text transform="translate(1065.04,742.6) scale(1.07,1)" x="0.0 32.6 67.6" y="0" font-size="57.5" fill="#ffffff" stroke="#000" stroke-width="0.55" font-family="'Noto Sans CJK SC','Liberation Sans',sans-serif" font-weight="100" shape-rendering="auto">LEB</text>
<text transform="translate(226.969,735.5) scale(0.63,1)" x="0.0 66.0" y="0" font-size="63" fill="#ffffff" stroke="#000" stroke-width="0.35" font-family="'Noto Sans CJK SC','Liberation Sans',sans-serif" font-weight="100" shape-rendering="auto">电井</text>
<text transform="translate(1287.5,519) skewY(-6) scale(0.62,1)" x="-97.9 -31.3 36.9" y="-5.5 0 3" font-size="62" fill="#ffffff" stroke="#000" stroke-width="0.35" font-family="'Noto Sans CJK SC','Liberation Sans',sans-serif" font-weight="100" shape-rendering="auto">卫生间</text>
<text transform="translate(1637.5,519) skewY(-6) scale(0.62,1)" x="-97.9 -31.3 36.9" y="-5.5 0 3" font-size="62" fill="#ffffff" stroke="#000" stroke-width="0.35" font-family="'Noto Sans CJK SC','Liberation Sans',sans-serif" font-weight="100" shape-rendering="auto">卫生间</text>
<rect x="0" y="69" width="1672" height="1" fill="#000"/>
</svg>
<div id="float">
<svg style="left:8px" width="20" height="20" viewBox="0 0 20 20" fill="none" stroke="#dcdcdc" stroke-width="1.5"><rect x="2" y="3.5" width="6" height="6" rx="1.5"/><rect x="2" y="12" width="6" height="6" rx="1.5"/><rect x="10.5" y="12" width="6" height="6" rx="1.5"/><rect x="10.6" y="3.6" width="5.8" height="5.8" rx="1.2" transform="rotate(45 13.5 6.5)"/></svg>
<div class="vs" style="left:37px"></div>
<div class="lbl">标注分类</div>
<div id="dd"><div class="sw"></div><span>未分类</span><div class="tri"></div></div>
<div class="vs" style="left:248px"></div>
<svg style="left:256.5px" width="22" height="22" viewBox="0 0 22 22" fill="none" stroke="#dcdcdc" stroke-width="1.4"><path d="M12.5,2.1 H7.3 Q5.8,2.1 5.8,3.6 V14.2 H18.6 Q20.1,14.2 20.1,12.7 V9.5"/><path d="M5.8,4.8 H4.1 Q2.6,4.8 2.6,6.3 V17.2 Q2.6,18.7 4.1,18.7 H17.7 Q19.2,18.7 19.2,17.2 V14.2"/><path d="M10,11.6 L10.9,8 L17.8,1.2 L20.5,3.7 L13.6,10.6 Z" fill="#5f5f5f"/></svg>
<svg style="left:289.5px" width="22" height="22" viewBox="0 0 22 22" fill="none" stroke="#dcdcdc" stroke-width="1.4"><path d="M11.4,2.5 V18 M3.6,10.2 H19.2"/><path d="M11.4,1 L8.7,4.5 H14.1 Z M11.4,19.4 L8.7,15.9 H14.1 Z M2.2,10.2 L5.7,7.5 V12.9 Z M20.6,10.2 L17.1,7.5 V12.9 Z" fill="#dcdcdc" stroke-width="0.6"/></svg>
<svg style="left:322.5px" width="22" height="22" viewBox="0 0 22 22" fill="none" stroke="#dcdcdc" stroke-width="1.4"><rect x="2.9" y="5.3" width="12.2" height="13.4" rx="2.6"/><path d="M8,5.3 V3.7 Q8,1.2 10.5,1.2 H17.6 Q20.1,1.2 20.1,3.7 V12.2 Q20.1,14.7 17.6,14.7 H15.1"/></svg>
<svg style="left:355.5px" width="22" height="22" viewBox="0 0 22 22" fill="none" stroke="#dcdcdc" stroke-width="1.4"><path d="M11.1,16.9 H4.8 Q2.8,16.9 2.8,14.9 V4.6 Q2.8,2.6 4.8,2.6 H14.7 Q16.7,2.6 16.7,4.6 V9.3"/><rect x="5.5" y="1.2" width="8.5" height="3.6" rx="1.2" fill="#5f5f5f"/><rect x="11.1" y="9.3" width="9.2" height="9.2" rx="1" fill="#5f5f5f"/></svg>
</div>
<div id="bottom"><div class="ln"></div>
<svg width="200" height="23" viewBox="0 0 200 23"><path d="M68,0 L73,16 Q74,19 77,19 L123,19 Q126,19 127,16 L132,0" fill="#fff" stroke="#333" stroke-width="1"/><path d="M1,0 L6.5,16.5 Q7.5,19 10,19 L59,19 Q62,19 63,16.5 L68.5,0 Z" fill="#000"/><text x="23" y="15" font-size="12" fill="#fff" font-family="'Liberation Sans','Noto Sans CJK SC',sans-serif">模型</text><text x="85" y="15" font-size="12" fill="#000" font-family="'Liberation Sans','Noto Sans CJK SC',sans-serif">布局1</text></svg>
</div>
</body></html>
